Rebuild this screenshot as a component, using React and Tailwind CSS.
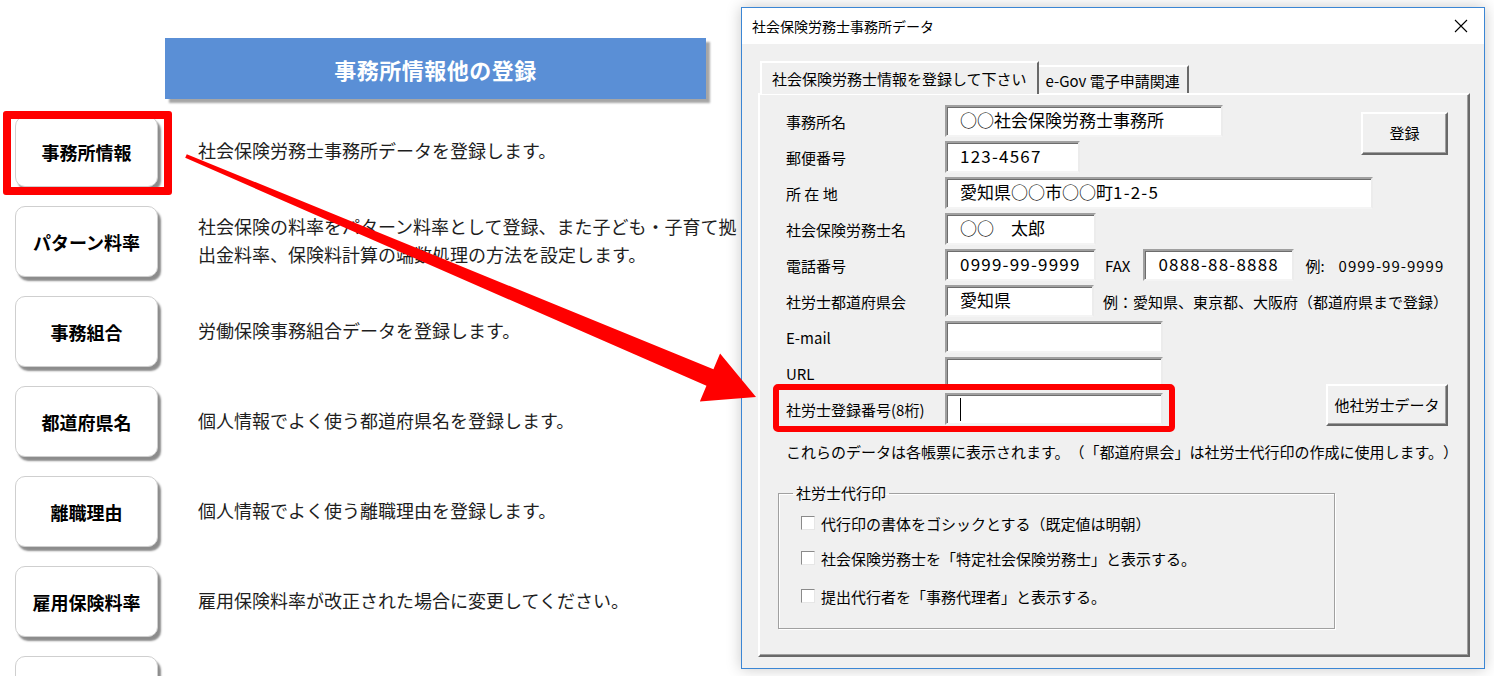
import React from "react";

const rows = [
  { label: "事務所情報", lines: ["社会保険労務士事務所データを登録します。"] },
  {
    label: "パターン料率",
    lines: [
      "社会保険の料率をパターン料率として登録、また子ども・子育て拠",
      "出金料率、保険料計算の端数処理の方法を設定します。",
    ],
  },
  { label: "事務組合", lines: ["労働保険事務組合データを登録します。"] },
  { label: "都道府県名", lines: ["個人情報でよく使う都道府県名を登録します。"] },
  { label: "離職理由", lines: ["個人情報でよく使う離職理由を登録します。"] },
  { label: "雇用保険料率", lines: ["雇用保険料率が改正された場合に変更してください。"] },
  { label: "", lines: [] },
];

const inputCls =
  "h-[32px] bg-white border-2 border-t-[#a0a0a0] border-l-[#a0a0a0] border-b-[#f4f4f4] border-r-[#ececec] shadow-[inset_1px_1px_0_#6d6d6d] flex items-center pl-[13px] pb-[4px] text-[17px] leading-none text-black whitespace-nowrap";

const btnCls =
  "bg-[#f0f0f0] border-2 border-t-white border-l-white border-r-[#696969] border-b-[#696969] shadow-[inset_-1px_-1px_0_#a0a0a0] flex items-center justify-center text-[15px] text-black whitespace-nowrap";

function Label({ children }) {
  return (
    <div className="flex items-center pt-[1px] text-[15px] leading-none text-black whitespace-nowrap">
      {children}
    </div>
  );
}

function Num({ children }) {
  return <span className="tracking-[1.2px]">{children}</span>;
}

function Check({ children, className }) {
  return (
    <div className={"flex items-center h-[24px] " + className}>
      <span className="w-[14px] h-[14px] bg-white border border-t-[#8a8a8a] border-l-[#8a8a8a] border-b-[#e6e6e6] border-r-[#e6e6e6]" />
      <span className="ml-[6px] text-[15px] leading-none text-black whitespace-nowrap">{children}</span>
    </div>
  );
}

export default function App() {
  return (
    <div className="relative w-[1494px] h-[676px] overflow-hidden bg-white font-['Noto_Sans_CJK_JP',sans-serif] [text-spacing-trim:space-all]">
      {/* Left sheet content */}
      <div className="flex flex-col">
        <div className="ml-[165px] mt-[38px] w-[541px] h-[61px] bg-[#5a8fd6] shadow-[4px_4px_2px_rgba(0,0,0,0.35)] flex items-center justify-center">
          <span className="text-white font-bold text-[22px] leading-none tracking-[0.5px]">事務所情報他の登録</span>
        </div>
        <div className="mt-[17px] flex flex-col gap-[19px]">
          {rows.map((r, i) => (
            <div key={i} className="flex items-center h-[71px]">
              <div className="ml-[15px] w-[143px] h-[71px] shrink-0 bg-white border border-[#cfcfcf] rounded-[10px] shadow-[3px_4px_2px_rgba(0,0,0,0.45)] flex items-center justify-center">
                <span className="text-[18px] font-bold text-black leading-none">{r.label}</span>
              </div>
              <div className="ml-[40px] pb-[4px] text-[18px] leading-[28px] text-[#1e1e1e] whitespace-nowrap">
                {r.lines.map((l, j) => (
                  <div key={j}>{l}</div>
                ))}
              </div>
            </div>
          ))}
        </div>
      </div>

      {/* Dialog window */}
      <div className="absolute left-[741px] top-[7px] w-[744px] h-[662px] border border-[#3b86d4] bg-[#f0f0f0] shadow-[0_0_14px_rgba(0,0,0,0.22)] flex flex-col">
        <div className="h-[36px] bg-white flex items-center justify-between pl-[10px] pr-[12px] shrink-0">
          <span className="text-[14px] leading-none text-black">社会保険労務士事務所データ</span>
          <svg width="14" height="14" viewBox="0 0 14 14" className="mr-[4px]">
            <path d="M1 1 L13 13 M13 1 L1 13" stroke="#000" strokeWidth="1.1" fill="none" />
          </svg>
        </div>
        <div className="pl-[16px] pt-[17px]">
          <div className="flex items-end h-[32px] ml-[2px]">
            <div className="relative z-10 h-[33px] mb-[-1px] px-[10px] bg-[#f0f0f0] border-t-2 border-l-2 border-r-2 border-t-white border-l-white border-r-[#696969] flex items-center text-[15px] leading-none text-black whitespace-nowrap">
              社会保険労務士情報を登録して下さい
            </div>
            <div className="h-[28px] px-[7px] bg-[#f0f0f0] border-t-2 border-r-2 border-t-white border-r-[#696969] flex items-center text-[15px] leading-none text-black whitespace-nowrap">
              e-Gov 電子申請関連
            </div>
          </div>
          <div className="w-[712px] h-[564px] border-2 border-t-white border-l-white border-r-[#696969] border-b-[#696969] shadow-[inset_-1px_-1px_0_#a0a0a0] pl-[18px] pt-[10px]">
            <div className="ml-[8px] w-[662px] grid grid-cols-[159px_381px_122px] grid-rows-[repeat(9,32px)] gap-y-[4px]">
              <Label>事務所名</Label>
              <div className={inputCls + " w-[278px]"}>○○社会保険労務士事務所</div>
              <div className="row-span-2 justify-self-end mt-[7px] w-[87px] h-[43px]">
                <div className={btnCls + " w-full h-full"}>登録</div>
              </div>

              <Label>郵便番号</Label>
              <div className={inputCls + " w-[135px]"}>
                <Num>123-4567</Num>
              </div>

              <Label>所 在 地</Label>
              <div className={inputCls + " col-span-2 w-[428px]"}>
                愛知県○○市○○町<Num>1-2-5</Num>
              </div>

              <Label>社会保険労務士名</Label>
              <div className={inputCls + " col-span-2 w-[151px]"}>○○　太郎</div>

              <Label>電話番号</Label>
              <div className="col-span-2 flex items-center">
                <div className={inputCls + " w-[151px]"}>
                  <Num>0999-99-9999</Num>
                </div>
                <span className="ml-[9px] text-[15px] leading-none pt-[1px] text-black">FAX</span>
                <div className={inputCls + " ml-[13px] w-[151px]"}>
                  <Num>0888-88-8888</Num>
                </div>
                <span className="ml-[11px] text-[15px] leading-none pt-[1px] text-black whitespace-nowrap">例:</span>
                <span className="ml-[14px] text-[15px] leading-none pt-[1px] text-black whitespace-nowrap tracking-[1px]">
                  0999-99-9999
                </span>
              </div>

              <Label>社労士都道府県会</Label>
              <div className="col-span-2 flex items-center">
                <div className={inputCls + " w-[151px]"}>愛知県</div>
                <span className="ml-[9px] text-[15px] leading-none pt-[1px] text-black whitespace-nowrap">
                  例：愛知県、東京都、大阪府（都道府県まで登録）
                </span>
              </div>

              <Label>E-mail</Label>
              <div className={inputCls + " col-span-2 w-[218px]"}></div>

              <Label>URL</Label>
              <div className={inputCls + " w-[218px]"}></div>
              <div className="row-span-2 justify-self-end self-end w-[122px] h-[42px] mb-[-1px]">
                <div className={btnCls + " w-full h-full"}>他社労士データ</div>
              </div>

              <Label>社労士登録番号(8桁)</Label>
              <div className={inputCls.replace("pb-[4px]", "") + " w-[218px]"}>
                <span className="w-[1px] h-[23px] bg-black" />
              </div>
            </div>

            <div className="ml-[8px] mt-[16px] h-[20px] flex items-center text-[15px] leading-none text-black whitespace-nowrap">
              これらのデータは各帳票に表示されます。（「都道府県会」は社労士代行印の作成に使用します。）
            </div>

            <fieldset className="mt-[22px] w-[557px] h-[146px] border border-[#a0a0a0] shadow-[1px_1px_0_#fff,inset_1px_1px_0_#fff] pl-[22px]">
              <legend className="ml-[-8px] px-[3px] text-[15px] leading-[20px] text-black">社労士代行印</legend>
              <Check className="mt-[8px]">代行印の書体をゴシックとする（既定値は明朝）</Check>
              <Check className="mt-[11px]">社会保険労務士を「特定社会保険労務士」と表示する。</Check>
              <Check className="mt-[14px]">提出代行者を「事務代理者」と表示する。</Check>
            </fieldset>
          </div>
        </div>
      </div>

      {/* Annotations */}
      <div className="absolute left-[3px] top-[111px] w-[169px] h-[84px] border-[8px] border-[#ff0000] rounded-[3px] pointer-events-none" />
      <div className="absolute left-[773px] top-[384px] w-[402px] h-[48px] border-[6px] border-[#ff0000] rounded-[5px] pointer-events-none" />
      <svg className="absolute left-0 top-0 pointer-events-none" width="1494" height="676" viewBox="0 0 1494 676">
        <polygon
          points="186.78,154.16 713.45,369.26 720.06,353.6 756,397 699.84,401.5 706.45,385.84 185.22,157.84"
          fill="#ff0000"
        />
      </svg>
    </div>
  );
}
